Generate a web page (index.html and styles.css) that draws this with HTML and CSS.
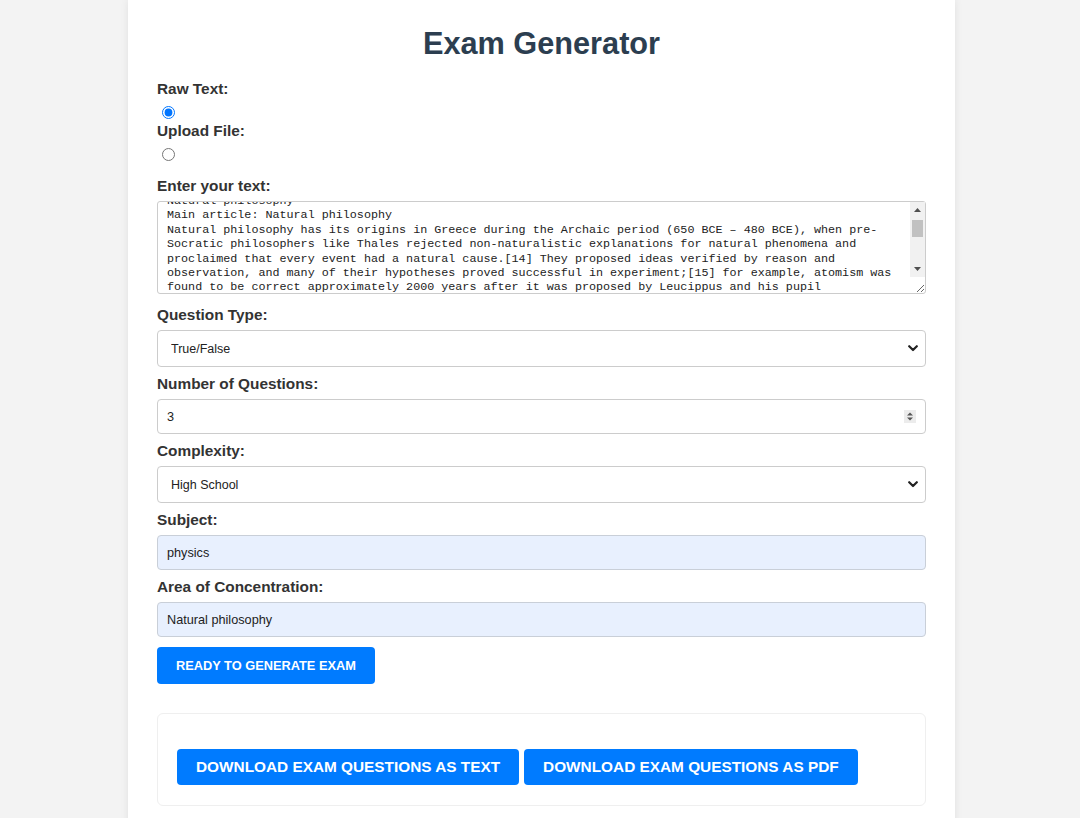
FILE: index.html
```html
<!DOCTYPE html>
<html lang="en">
<head>
<meta charset="utf-8">
<title>Exam Generator</title>
<link rel="stylesheet" href="styles.css">
</head>
<body>
<div class="container">
  <h1 class="title">Exam Generator</h1>
  <form class="form">
    <div class="radio-group">
      <label class="label" for="raw">Raw Text:</label>
      <input type="radio" id="raw" name="mode" class="radio" checked>
      <label class="label" for="file">Upload File:</label>
      <input type="radio" id="file" name="mode" class="radio">
    </div>
    <div class="field field-text">
      <label class="label" for="text">Enter your text:</label>
      <div class="textarea-wrap">
        <textarea id="text" class="textarea">Natural philosophy
Main article: Natural philosophy
Natural philosophy has its origins in Greece during the Archaic period (650 BCE – 480 BCE), when pre-Socratic philosophers like Thales rejected non-naturalistic explanations for natural phenomena and proclaimed that every event had a natural cause.[14] They proposed ideas verified by reason and observation, and many of their hypotheses proved successful in experiment;[15] for example, atomism was found to be correct approximately 2000 years after it was proposed by Leucippus and his pupil
Democritus.[16]
Aristotle's Physics
Main article: Aristotelian physics
During the classical period in Greece (6th, 5th and 4th centuries BCE) and in Hellenistic times, natural philosophy developed along many lines of inquiry. Aristotle (Greek: Ἀριστοτέλης, Aristotélēs) (384–322 BCE), a student of Plato, wrote on many subjects, including a substantial treatise on "Physics" – in the 4th century BC.</textarea>
        <div class="scrollbar" aria-hidden="true">
          <span class="sb-btn"><svg width="7" height="4" viewBox="0 0 7 4"><path d="M0 4 L3.5 0 L7 4 Z" fill="#505050"/></svg></span>
          <span class="sb-track"><span class="sb-thumb"></span></span>
          <span class="sb-btn"><svg width="7" height="4" viewBox="0 0 7 4"><path d="M0 0 L3.5 4 L7 0 Z" fill="#505050"/></svg></span>
        </div>
      </div>
    </div>
    <div class="field">
      <label class="label" for="qtype">Question Type:</label>
      <div class="select-wrap">
        <select id="qtype" class="select">
          <option>True/False</option>
          <option>Multiple Choice</option>
          <option>Short Answer</option>
        </select>
        <svg class="chevron" width="10" height="7" viewBox="0 0 10 7"><path d="M1.2 1.2 L5 5 L8.8 1.2" fill="none" stroke="#222" stroke-width="2.2" stroke-linecap="round" stroke-linejoin="round"/></svg>
      </div>
    </div>
    <div class="field">
      <label class="label" for="num">Number of Questions:</label>
      <div class="select-wrap">
        <input id="num" class="input" type="number" value="3">
        <svg class="spinner" width="12" height="13" viewBox="0 0 12 13"><rect width="12" height="13" fill="#ececec"/><path d="M3 5.5 L6 2.5 L9 5.5 Z" fill="#555"/><path d="M3 7.5 L6 10.5 L9 7.5 Z" fill="#555"/></svg>
      </div>
    </div>
    <div class="field">
      <label class="label" for="complexity">Complexity:</label>
      <div class="select-wrap">
        <select id="complexity" class="select">
          <option>High School</option>
          <option>College</option>
          <option>Graduate</option>
        </select>
        <svg class="chevron" width="10" height="7" viewBox="0 0 10 7"><path d="M1.2 1.2 L5 5 L8.8 1.2" fill="none" stroke="#222" stroke-width="2.2" stroke-linecap="round" stroke-linejoin="round"/></svg>
      </div>
    </div>
    <div class="field">
      <label class="label" for="subject">Subject:</label>
      <input id="subject" class="input input-filled" type="text" value="physics">
    </div>
    <div class="field">
      <label class="label" for="area">Area of Concentration:</label>
      <input id="area" class="input input-filled" type="text" value="Natural philosophy">
    </div>
    <button type="button" class="btn btn-generate">Ready to Generate Exam</button>
  </form>
  <div class="result">
    <button type="button" class="btn btn-download">Download Exam Questions as Text</button>
    <button type="button" class="btn btn-download">Download Exam Questions as PDF</button>
  </div>
</div>
<script src="script.js"></script>
</body>
</html>
```

FILE: styles.css
```css
html {
  overflow: hidden;
}

body {
  margin: 0;
  padding-left: 3px;
  background: #f3f3f3;
  font-family: "Liberation Sans", Arial, sans-serif;
  color: #333;
}

.container {
  width: 827px;
  box-sizing: border-box;
  margin: 0 auto;
  padding: 26px 29px 30px;
  background: #fff;
  box-shadow: 0 0 8px rgba(0, 0, 0, 0.08);
}

.title {
  margin: 0 0 18px;
  font-size: 30.7px;
  line-height: 36px;
  font-weight: bold;
  text-align: center;
  color: #2c3e50;
}

.form {
  display: flex;
  flex-direction: column;
  align-items: stretch;
}

.label {
  display: block;
  font-size: 15.36px;
  line-height: 18px;
  font-weight: bold;
  color: #333;
  margin-bottom: 6px;
}

.radio-group {
  margin-bottom: 13px;
}

.radio-group .label {
  margin-bottom: 0;
}

.radio {
  display: block;
  width: 13px;
  height: 13px;
  margin: 8px 0 3px 5px;
}

.field {
  margin-bottom: 8px;
}

.field-text {
  margin-bottom: 12px;
}

.textarea-wrap {
  position: relative;
}

.textarea {
  display: block;
  width: 100%;
  height: 93px;
  box-sizing: border-box;
  margin: 0;
  padding: 2px 24px 2px 9px;
  border: 1px solid #ccc;
  border-radius: 3px;
  font-family: "Liberation Mono", "DejaVu Sans Mono", monospace;
  font-size: 11.73px;
  line-height: 14.4px;
  color: #222;
  background: #fff;
  resize: vertical;
  overflow-y: hidden;
}

.scrollbar {
  position: absolute;
  top: 1px;
  right: 1px;
  width: 15px;
  height: 75px;
  display: flex;
  flex-direction: column;
  background: #f1f1f1;
  pointer-events: none;
}

.sb-btn {
  height: 16px;
  display: flex;
  align-items: center;
  justify-content: center;
}

.sb-track {
  flex: 1;
  display: flex;
  flex-direction: column;
}

.sb-thumb {
  height: 17px;
  margin: 2px 2px 0;
  background: #c1c1c1;
}

.select-wrap {
  position: relative;
}

.select {
  display: block;
  width: 100%;
  height: 37px;
  box-sizing: border-box;
  margin: 0;
  padding: 0 13px;
  border: 1px solid #ccc;
  border-radius: 4px;
  background: #fff;
  font-family: "Liberation Sans", Arial, sans-serif;
  font-size: 12.5px;
  color: #222;
  appearance: none;
  -webkit-appearance: none;
}

.chevron {
  position: absolute;
  right: 8px;
  top: 15px;
  pointer-events: none;
}

.spinner {
  position: absolute;
  right: 10px;
  top: 11px;
  pointer-events: none;
}

.input {
  display: block;
  width: 100%;
  height: 35px;
  box-sizing: border-box;
  margin: 0;
  padding: 0 9px;
  border: 1px solid #ccc;
  border-radius: 4px;
  background: #fff;
  font-family: "Liberation Sans", Arial, sans-serif;
  font-size: 12.7px;
  color: #222;
}

.input::-webkit-inner-spin-button,
.input::-webkit-outer-spin-button {
  -webkit-appearance: none;
  margin: 0;
}

.input-filled {
  background: #e8f0fe;
  border-color: #c9cfd8;
}

.btn {
  border: none;
  border-radius: 4px;
  background: #007bff;
  color: #fff;
  font-family: "Liberation Sans", Arial, sans-serif;
  font-weight: bold;
  text-transform: uppercase;
  cursor: pointer;
}

.btn-generate {
  align-self: flex-start;
  height: 37px;
  margin-top: 2px;
  padding: 0 19px;
  font-size: 12.8px;
}

.result {
  display: flex;
  gap: 5px;
  margin-top: 29px;
  padding: 35px 19px 20px;
  border: 1px solid #efefef;
  border-radius: 6px;
}

.btn-download {
  height: 36px;
  padding: 0 19px;
  font-size: 15.36px;
}
```

FILE: script.js
```js
document.getElementById('text').scrollTop = 10;
```
